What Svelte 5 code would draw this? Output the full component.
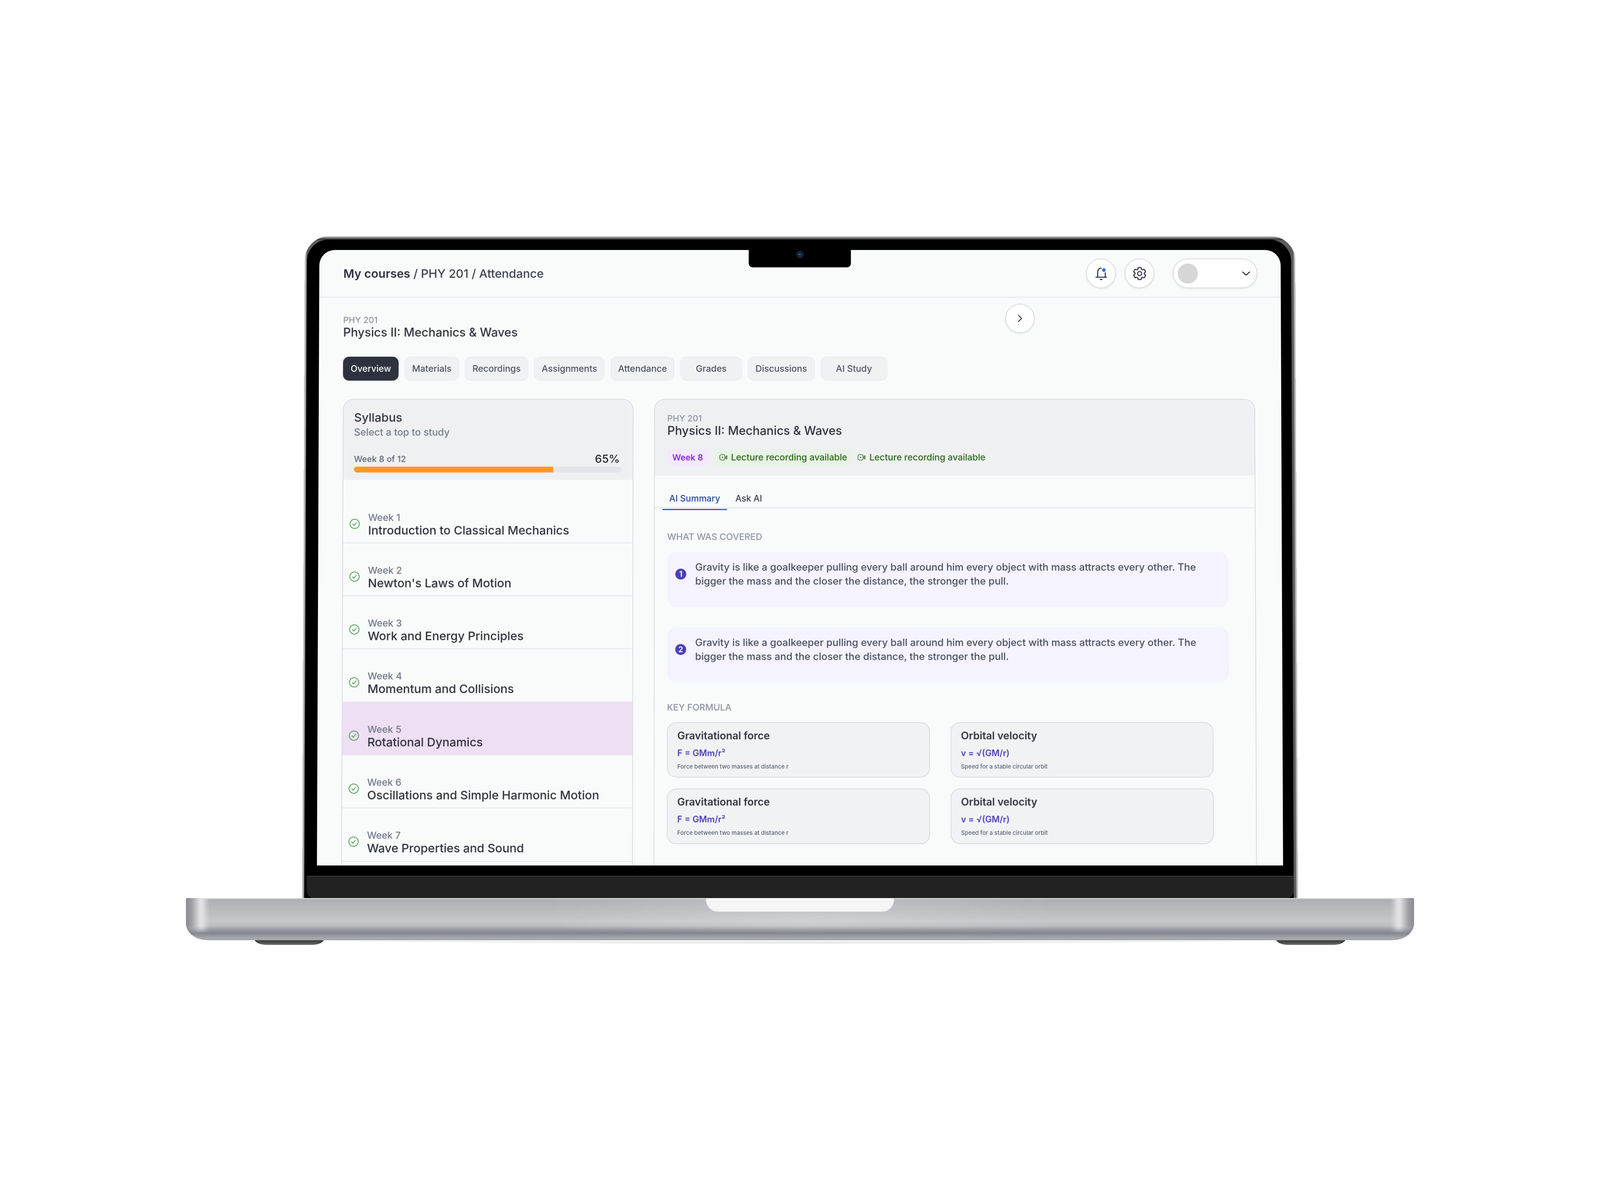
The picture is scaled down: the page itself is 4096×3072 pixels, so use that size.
<script>
  const tabs = [
    { label: 'Overview', cls: 'on' }, { label: 'Materials', cls: '' }, { label: 'Recordings', cls: '' },
    { label: 'Assignments', cls: '' }, { label: 'Attendance', cls: '' }, { label: 'Grades', cls: 'wide' },
    { label: 'Discussions', cls: '' }, { label: 'AI Study', cls: 'wide' }
  ];
  const weeks = [
    ['Week 1', 'Introduction to Classical Mechanics'],
    ['Week 2', "Newton's Laws of Motion"],
    ['Week 3', 'Work and Energy Principles'],
    ['Week 4', 'Momentum and Collisions'],
    ['Week 5', 'Rotational Dynamics'],
    ['Week 6', 'Oscillations and Simple Harmonic Motion'],
    ['Week 7', 'Wave Properties and Sound']
  ];
  const summary = 'Gravity is like a goalkeeper pulling every ball around him every object with mass attracts every other. The bigger the mass and the closer the distance, the stronger the pull.';
  const formulas = [
    ['Gravitational force', 'F = GMm/r²', 'Force between two masses at distance r'],
    ['Orbital velocity', 'v = √(GM/r)', 'Speed for a stable circular orbit'],
    ['Gravitational force', 'F = GMm/r²', 'Force between two masses at distance r'],
    ['Orbital velocity', 'v = √(GM/r)', 'Speed for a stable circular orbit']
  ];
</script>

{#snippet video()}
  <svg class="vid" viewBox="0 0 20 16" fill="none" stroke="currentColor" stroke-width="1.6">
    <rect x="1" y="1" width="13" height="14" rx="4" />
    <circle cx="7.5" cy="8" r="1.8" fill="currentColor" stroke="none" />
    <path d="M16.5 5 19 4v8l-2.500-1z" />
  </svg>
{/snippet}

<div class="stage">
  <div class="lid">
    <div class="frame">
      <div class="screen">
        <div class="notch"><span class="cam"><i></i></span></div>

        <header class="top">
          <div class="crumbs"><b>My courses</b> / PHY 201 / Attendance</div>
          <div class="actions">
            <button class="round" aria-label="Notifications">
              <svg class="bell" viewBox="0 0 30 34" fill="none" stroke="#232a3d" stroke-width="2.600" stroke-linecap="round">
                <path d="M6 26V14C6 7.500 9.500 3 15 3" />
                <path d="M25.500 15v11" />
                <path d="M1.500 26.500h27" />
                <path d="M11 31h7.500a3.700 3 0 0 1-7.500 0z" fill="#232a3d" stroke="none" />
                <circle cx="22" cy="8" r="4.700" fill="#2b6cf0" stroke="none" />
              </svg>
            </button>
            <button class="round" aria-label="Settings">
              <svg class="gear" viewBox="0 0 24 24" fill="none" stroke="#232a3d" stroke-width="1.500" stroke-linejoin="round">
                <path d="M9.594 3.940c.09-.542.56-.94 1.110-.94h2.593c.55 0 1.020.398 1.110.94l.213 1.281c.063.374.313.686.645.870.074.04.147.083.22.127.325.196.72.257 1.075.124l1.217-.456a1.125 1.125 0 0 1 1.370.49l1.296 2.247a1.125 1.125 0 0 1-.26 1.431l-1.003.827c-.293.241-.438.613-.43.992a7.723 7.723 0 0 1 0 .255c-.008.378.137.75.43.991l1.004.827c.424.35.534.955.26 1.430l-1.298 2.247a1.125 1.125 0 0 1-1.369.491l-1.217-.456c-.355-.133-.75-.072-1.076.124a6.470 6.470 0 0 1-.22.128c-.331.183-.581.495-.644.869l-.213 1.281c-.09.543-.56.94-1.110.94h-2.594c-.55 0-1.019-.398-1.110-.94l-.213-1.281c-.062-.374-.312-.686-.644-.87a6.520 6.520 0 0 1-.22-.127c-.325-.196-.72-.257-1.076-.124l-1.217.456a1.125 1.125 0 0 1-1.369-.49l-1.297-2.247a1.125 1.125 0 0 1 .26-1.431l1.004-.827c.292-.24.437-.613.43-.991a6.932 6.932 0 0 1 0-.255c.007-.38-.138-.751-.43-.992l-1.004-.827a1.125 1.125 0 0 1-.26-1.430l1.297-2.247a1.125 1.125 0 0 1 1.370-.491l1.216.456c.356.133.751.072 1.076-.124.072-.044.146-.086.22-.128.332-.183.582-.495.644-.869l.214-1.280Z" />
                <circle cx="12" cy="12" r="3" />
              </svg>
            </button>
            <button class="pill" aria-label="Account">
              <span class="avatar"></span>
              <svg class="chev" viewBox="0 0 22 14" fill="none" stroke="#232a3d" stroke-width="2.400" stroke-linecap="round" stroke-linejoin="round"><path d="M2 3l9 8 9-8" /></svg>
            </button>
          </div>
        </header>

        <section class="course">
          <div class="ctitle">
            <div class="code">PHY 201</div>
            <div class="name">Physics II: Mechanics &amp; Waves</div>
          </div>
          <button class="round next" aria-label="Next">
            <svg viewBox="0 0 14 22" width="14" height="22" fill="none" stroke="#232a3d" stroke-width="2.400" stroke-linecap="round" stroke-linejoin="round"><path d="M3 3l8 8-8 8" /></svg>
          </button>
        </section>

        <nav class="tabs">
          {#each tabs as t}<span class="tab {t.cls}">{t.label}</span>{/each}
        </nav>

        <div class="panels">
          <aside class="panel syl">
            <div class="head">
              <div class="h1">Syllabus</div>
              <div class="h2">Select a top to study</div>
              <div class="prog"><span>Week 8 of 12</span><strong>65%</strong></div>
              <div class="bar"><div class="fill" style="width:74.400%"></div></div>
            </div>
            <ul class="list">
              {#each weeks as w, i}
                <li class="row" class:sel={i === 4}>
                  <svg class="chk" viewBox="0 0 27 27" fill="none" stroke="#4a9a4e" stroke-width="2" stroke-linecap="round" stroke-linejoin="round">
                    <circle cx="13.500" cy="13.500" r="12" />
                    <path d="M9 14l3.200 3.500L18 10" />
                  </svg>
                  <div>
                    <div class="wk">{w[0]}</div>
                    <div class="wt">{w[1]}</div>
                  </div>
                </li>
              {/each}
            </ul>
          </aside>

          <main class="panel det">
            <div class="dhead">
              <div class="code">PHY 201</div>
              <div class="name">Physics II: Mechanics &amp; Waves</div>
              <div class="badges">
                <span class="b week">Week 8</span>
                <span class="b rec">{@render video()}Lecture recording available</span>
                <span class="b rec plain">{@render video()}Lecture recording available</span>
              </div>
            </div>
            <div class="sub">
              <span class="st act">AI Summary</span>
              <span class="st">Ask AI</span>
            </div>
            <div class="body">
              <div class="label">WHAT WAS COVERED</div>
              <div class="items">
                {#each [1, 2] as n}
                  <div class="item">
                    <span class="num">{n}</span>
                    <p>{summary}</p>
                  </div>
                {/each}
              </div>
              <div class="label key">KEY FORMULA</div>
              <div class="grid">
                {#each formulas as f}
                  <div class="card">
                    <div class="ft">{f[0]}</div>
                    <div class="fm">{f[1]}</div>
                    <div class="fd">{f[2]}</div>
                  </div>
                {/each}
              </div>
            </div>
          </main>
        </div>
      </div>
      <div class="lower"></div>
      <div class="chin"></div>
    </div>
  </div>

  <div class="base">
    <span class="foot l"></span>
    <span class="foot r"></span>
    <div class="metal">
      <span class="sheen"></span>
      <span class="groove"></span>
      <span class="lip"></span>
    </div>
    <span class="ground"></span>
  </div>
</div>

<style>
  :global(body) { margin: 0; background: #fff; }
  .stage { width: 4096px; height: 3072px; display: flex; flex-direction: column; align-items: center; padding-top: 594px; box-sizing: border-box; overflow: hidden; font-family: Inter, "Noto Sans", sans-serif; background: #fff; }
  .lid { width: 2550px; box-sizing: border-box; padding: 9px 11px 0 6px; border-radius: 64px 64px 0 0; background: linear-gradient(#ececec 0, #9a9a9b 3px, #4a4a4b 7px, #303031 10px) top / 100% 10px no-repeat, linear-gradient(90deg, #cfcfd1, #b8b8ba 3px, #5a5b5e 6px, #5a5b5e calc(100% - 6px), #b8b8ba calc(100% - 3px), #cfcfd1); transform: perspective(10800px) rotateX(2deg); transform-origin: 50% 100%; }
  .frame { background: #000; border-radius: 56px 56px 0 0; padding: 27px 27px 0 32px; display: flex; flex-direction: column; }
  .screen { position: relative; height: 1586px; width: 2474px; background: #f9fafa; border-radius: 40px 40px 0 0; overflow: hidden; border-bottom: 1px solid #888; box-sizing: border-box; color: #2c313c; font-weight: 450; }
  .lower { height: 26px; }
  .chin { height: 57px; margin: 0 -27px 0 -26px; background: #222; border-top: 2px solid #3c3c3c; box-sizing: border-box; border-radius: 0 0 18px 18px; }

  .notch { position: absolute; top: 0; left: 1105px; width: 263px; height: 45px; background: #000; border-radius: 0 0 10px 10px; display: flex; align-items: center; justify-content: center; }
  .cam { width: 20px; height: 20px; border-radius: 50%; background: #1a2034; margin-top: -22px; display: flex; align-items: center; justify-content: center; }
  .cam i { width: 5px; height: 3px; border-radius: 2px; background: #3a7bd8; }

  .top { height: 123px; box-sizing: border-box; border-bottom: 2px solid #e4e6eb; display: flex; align-items: center; justify-content: space-between; padding: 0 60px 0 62px; }
  .crumbs { font-size: 30.400px; line-height: 40px; color: #3c4250; }
  .crumbs b { font-weight: 570; color: #2c313c; }
  .actions { display: flex; align-items: center; gap: 22px; }
  .round { width: 77px; height: 77px; padding: 0; border-radius: 50%; background: #fff; border: 2px solid #d9dbe4; box-shadow: 0 2px 5px rgba(30, 35, 60, .08); display: flex; align-items: center; justify-content: center; box-sizing: border-box; }
  .bell { width: 30px; height: 34px; }
  .gear { width: 42px; height: 42px; }
  .pill { width: 218px; height: 77px; margin-left: 25px; padding: 0 16px 0 11px; border-radius: 39px; background: #fff; border: 2px solid #d9dbe4; box-shadow: 0 2px 5px rgba(30, 35, 60, .08); display: flex; align-items: center; justify-content: space-between; box-sizing: border-box; }
  .avatar { width: 52px; height: 52px; border-radius: 50%; background: #d6d6d6; }
  .chev { width: 22px; height: 14px; }

  .course { height: 153px; box-sizing: border-box; padding: 16px 633px 0 62px; display: flex; justify-content: space-between; align-items: flex-start; }
  .ctitle { margin-top: 28px; }
  .code { font-size: 22px; line-height: 28px; color: #8b93a3; }
  .name { font-size: 30.600px; line-height: 36px; font-weight: 550; color: #2c313c; white-space: nowrap; }
  .next { width: 76px; height: 76px; }

  .tabs { display: flex; gap: 15px; padding-left: 62px; }
  .tab { height: 61.500px; box-sizing: border-box; padding: 0 18.400px; border-radius: 15px; background: #f0f1f3; border: 1.500px solid #e8e9ee; font-size: 23px; font-weight: 550; color: #4b5160; display: flex; align-items: center; }
  .tab.on { background: #2d323e; border-color: #2d323e; color: #f5f6f8; }
  .tab.wide { padding: 0 38.800px; }

  .panels { margin-top: 47px; padding: 0 67px 0 62px; display: grid; grid-template-columns: 747px 1545px; gap: 53px; }
  .panel { border: 2px solid #d9dbe4; border-radius: 28px; overflow: hidden; height: 1300px; box-sizing: border-box; }

  .head { height: 207px; box-sizing: border-box; background: #eff0f2; padding: 28px 28px 0 27px; }
  .h1 { font-size: 30.500px; line-height: 36px; font-weight: 550; color: #2c313c; }
  .h2 { margin-top: 4px; font-size: 25.100px; line-height: 32px; color: #727b8c; }
  .prog { margin-top: 36px; height: 34px; display: flex; align-items: center; justify-content: space-between; padding-right: 5px; }
  .prog span { font-size: 21.800px; color: #5c6577; }
  .prog strong { font-size: 28.600px; font-weight: 450; color: #23272f; }
  .bar { margin-top: 3px; height: 15px; border-radius: 8px; background: #e4e5ea; overflow: hidden; }
  .fill { height: 100%; background: #fd9822; border-radius: 8px 0 0 8px; }

  .list { list-style: none; margin: 0; padding: 28px 0 0; }
  .row { height: 136.300px; box-sizing: border-box; padding: 53px 0 0 16px; display: flex; gap: 21px; align-items: flex-start; border-bottom: 2px solid #e3e5ec; }
  .row.sel { background: #eedff5; }
  .chk { width: 27px; height: 27px; margin-top: 19px; flex: none; }
  .wk { font-size: 24.500px; line-height: 32px; color: #6e788b; }
  .wt { font-size: 30.350px; line-height: 38px; margin-top: -2px; color: #2c313c; white-space: nowrap; }

  .dhead { height: 196px; box-sizing: border-box; background: #eff0f2; padding: 34px 32px 0; }
  .badges { display: flex; gap: 16px; margin-top: 30px; }
  .b { height: 42px; box-sizing: border-box; display: inline-flex; align-items: center; border-radius: 7px; font-size: 23px; font-weight: 550; white-space: nowrap; }
  .week { background: #f3e8fe; color: #7c14e0; padding: 0 13px; font-size: 22px; }
  .rec { background: #e8f2e6; color: #24660f; padding: 0 11px 0 13px; gap: 10px; }
  .rec.plain { background: none; padding: 0; }
  .vid { width: 20px; height: 16px; flex: none; }

  .sub { height: 84px; box-sizing: border-box; border-bottom: 2px solid #e2e4ea; display: flex; padding-left: 19px; align-items: flex-end; gap: 3px; }
  .st { position: relative; height: 58px; box-sizing: border-box; padding: 21px 18px 0; font-size: 22.500px; font-weight: 550; color: #3a404d; display: flex; align-items: flex-start; line-height: 28px; }
  .st.act { color: #2447a8; }
  .st.act::after { content: ''; position: absolute; left: 0; right: 0; bottom: -7px; height: 3px; background: #2a5cc0; border-radius: 2px; }

  .body { padding: 59px 32px 0; }
  .label { font-size: 23px; line-height: 30px; font-weight: 550; color: #8b93a3; }
  .items { margin-top: 24px; display: flex; flex-direction: column; gap: 52px; width: 1441px; }
  .item { height: 142px; box-sizing: border-box; background: #f5f3ff; border-radius: 24px; padding: 21px 50px 0 21px; display: flex; gap: 23px; align-items: flex-start; }
  .num { width: 28px; height: 28px; margin-top: 22px; border-radius: 50%; flex: none; background: #4b3fb8; color: #fff; font-size: 20px; font-weight: 600; display: flex; align-items: center; justify-content: center; }
  .item p { margin: 0; font-size: 25.650px; line-height: 36.800px; color: #474f60; }
  .label.key { margin-top: 49px; }
  .grid { margin-top: 23px; width: 1401px; display: grid; grid-template-columns: 1fr 1fr; gap: 28px 53px; }
  .card { height: 142.500px; box-sizing: border-box; background: #f1f2f4; border: 2.500px solid #d9dbe4; border-radius: 24px; padding: 14px 24.500px 0; }
  .ft { font-size: 26.600px; line-height: 36px; font-weight: 600; color: #2f343f; }
  .fm { margin-top: 12px; font-size: 22.200px; line-height: 30px; font-weight: 600; color: #4b3fb8; }
  .fd { margin-top: 9px; font-size: 14.800px; line-height: 22px; color: #5a6270; }

  .base { position: relative; width: 3144px; height: 108px; flex: none; z-index: 2; }
  .metal { position: absolute; inset: 0; overflow: hidden; border-radius: 3px 3px 55px 55px / 3px 3px 43px 43px; background: linear-gradient(#dcdcde 0, #dcdcde 1.500px, #aeafb3 3px, #bcbdc1 35%, #c7c8cc 55%, #bcbdc2 66%, #90919a 77%, #85868e 84%, #9ea0a5 90%, #a4a5a9 92%, #a8a9ad 100%); }
  .sheen { position: absolute; inset: 0; background: linear-gradient(90deg, #8b8c90 0, #9d9ea2 14px, #e2e2e6 36px, #e0e0e4 42px, rgba(200, 200, 205, 0) 60px, rgba(255, 255, 255, 0) 900px, rgba(255, 255, 255, .18) 1572px, rgba(255, 255, 255, 0) 2250px, rgba(200, 200, 205, 0) 3084px, #e0e0e4 3102px, #e2e2e6 3108px, #9d9ea2 3130px, #8b8c90 100%); -webkit-mask-image: linear-gradient(#000 65%, transparent 84%); mask-image: linear-gradient(#000 65%, transparent 84%); }
  .groove { position: absolute; left: 28px; right: 28px; bottom: 10px; height: 1px; background: rgba(120, 122, 130, .6); }
  .lip { position: absolute; top: 0; left: 1329px; width: 486px; height: 35px; background: #f5f5f6; border-radius: 0 0 32px 32px; box-shadow: inset 3px 0 3px -2px #8b8c94, inset -3px 0 3px -2px #8b8c94; }
  .foot { position: absolute; top: 100px; width: 177px; height: 20px; background: linear-gradient(#2c2d31, #4a4b50 70%, #77787c); border-radius: 0 0 32px 32px / 0 0 14px 14px; }
  .foot.l { left: 176px; }
  .foot.r { left: 2791px; }
  .ground { position: absolute; top: 108px; left: 364px; width: 2410px; height: 8px; background: linear-gradient(#f6f6f6, #eeeeee 70%, #cfcfcf); border-radius: 0 0 50% 50% / 0 0 100% 100%; z-index: -1; }
</style>
